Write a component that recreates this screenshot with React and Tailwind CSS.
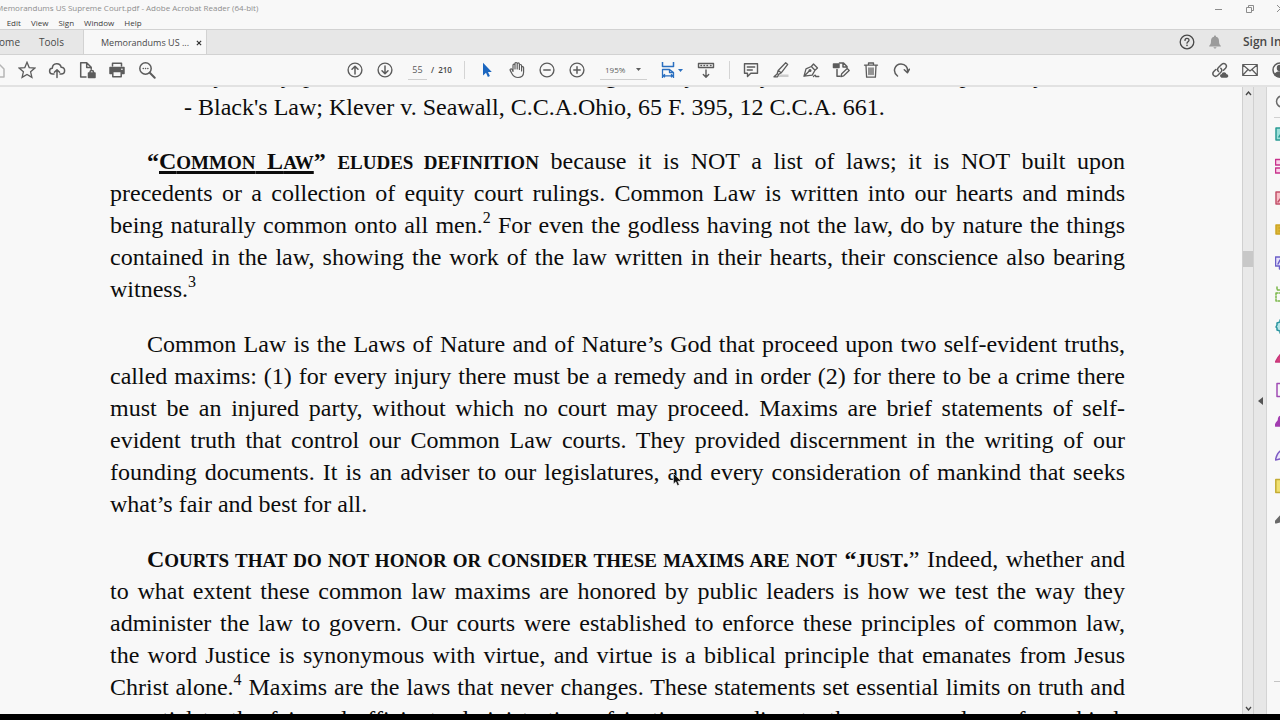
import React from "react";

const STROKE = {
  fill: "none",
  stroke: "currentColor",
  strokeWidth: 1.5,
  strokeLinecap: "round",
  strokeLinejoin: "round",
};

function Icon({ children, className = "size-[18px]", box = "0 0 18 18" }) {
  return (
    <svg viewBox={box} className={className} aria-hidden="true" {...STROKE}>
      {children}
    </svg>
  );
}

function ToolButton({ label, children, className = "" }) {
  return (
    <button
      type="button"
      aria-label={label}
      className={`flex h-8 w-[30px] shrink-0 items-center justify-center ${className}`}
    >
      {children}
    </button>
  );
}

function TitleBar() {
  return (
    <header className="flex h-4 shrink-0 items-center overflow-hidden">
      <h1 className="-ml-1 whitespace-nowrap text-[8px] text-[#8e8e8e]">
        Memorandums US Supreme Court.pdf - Adobe Acrobat Reader (64-bit)
      </h1>
      <div className="-mr-4 ml-auto flex shrink-0 text-[#8c8c8c]">
        <button type="button" aria-label="Minimize" className="flex w-[31px] justify-center">
          <svg viewBox="0 0 9 9" className="size-[9px]" fill="none" stroke="currentColor">
            <path d="M1 5.5h7" />
          </svg>
        </button>
        <button type="button" aria-label="Restore" className="flex w-[31px] justify-center">
          <svg viewBox="0 0 9 9" className="size-[9px]" fill="none" stroke="currentColor">
            <path d="M1.5 3.5h5v5h-5zM3.5 3.5v-2h5v5h-2" />
          </svg>
        </button>
        <button type="button" aria-label="Close" className="flex w-[31px] justify-center">
          <svg viewBox="0 0 9 9" className="size-[9px]" fill="none" stroke="currentColor">
            <path d="M1 1l7 7M8 1L1 8" />
          </svg>
        </button>
      </div>
    </header>
  );
}

function MenuBar() {
  return (
    <nav className="-ml-4 flex h-[13px] shrink-0 items-center gap-[10px] text-[8px] text-[#3c3c3c]">
      {["File", "Edit", "View", "Sign", "Window", "Help"].map((name) => (
        <button key={name} type="button">
          {name}
        </button>
      ))}
    </nav>
  );
}

function TabRow() {
  return (
    <div className="flex h-[26px] shrink-0 items-stretch overflow-hidden border-y border-[#d2d2d2] bg-[#e7e7e7] text-[10px] text-[#484848]">
      <button type="button" className="-ml-3 w-8 text-right">
        Home
      </button>
      <button type="button" className="w-16 border-r border-[#d2d2d2]">
        Tools
      </button>
      <div className="-mb-px flex w-[123px] items-center gap-[7px] border-r border-[#d2d2d2] bg-[#f8f8f8] pl-[17px]">
        <button type="button" className="whitespace-nowrap text-[9px]">
          Memorandums US ...
        </button>
        <button type="button" aria-label="Close tab">
          <svg viewBox="0 0 7 7" className="size-[6px]" fill="none" stroke="#333" strokeWidth="1.4">
            <path d="M1 1l5 5M6 1L1 6" />
          </svg>
        </button>
      </div>
      <div className="-mr-2 ml-auto flex shrink-0 items-center">
        <button type="button" aria-label="Help" className="flex w-7 justify-center">
          <Icon className="size-4" box="0 0 16 16">
            <circle cx="8" cy="8" r="6.8" strokeWidth="1.300" />
            <path d="M6 6.4c0-2.6 4-2.6 4-.2 0 1.5-2 1.500-2 3" strokeWidth="1.300" />
            <path d="M8 11.400v.1" strokeWidth="1.600" />
          </Icon>
        </button>
        <button type="button" aria-label="Notifications" className="flex w-7 justify-center text-[#9b9b9b]">
          <svg viewBox="0 0 14 14" className="size-[14px]" fill="currentColor">
            <path d="M7 .5c.8 0 1 .5 1 1.200 2.200.500 3 2.300 3 4.300 0 2.500.600 3.600 1.800 4.800v.7H1.200v-.7C2.400 9.600 3 8.500 3 6c0-2 .8-3.800 3-4.300C6 1 6.200.5 7 .5zM5.500 12.300h3c-.2 1.600-2.800 1.600-3 0z" />
          </svg>
        </button>
        <button type="button" className="ml-[14px] w-[45px] whitespace-nowrap text-left text-[12px] font-semibold">
          Sign In
        </button>
      </div>
    </div>
  );
}

function Separator() {
  return <div className="h-[18px] w-px shrink-0 bg-[#d4d4d4]" />;
}

function Caret({ className = "" }) {
  return (
    <svg viewBox="0 0 5 3" className={`h-[3px] w-[5px] ${className}`} fill="currentColor" aria-hidden="true">
      <path d="M0 0h5L2.500 3z" />
    </svg>
  );
}

function Toolbar() {
  return (
    <div className="flex h-8 shrink-0 items-center overflow-hidden border-b-2 border-[#e2e2e2] text-[#5c5c5c]">
      <div className="-ml-[18px] flex shrink-0">
        <ToolButton label="Save" className="text-[#b5b5b5]">
          <Icon>
            <path d="M3 3h8l5 5v8H3z" />
          </Icon>
        </ToolButton>
        <ToolButton label="Star">
          <Icon>
            <path d="M9 1.300l2.200 5.300 5.700.5-4.300 3.700 1.300 5.600L9 13.400l-4.900 3 1.300-5.600-4.300-3.700 5.700-.5z" strokeWidth="1.300" strokeLinejoin="miter" />
          </Icon>
        </ToolButton>
        <ToolButton label="Upload">
          <Icon>
            <path d="M6 13H4.800C.6 13 .6 7.400 4.300 7.200 4.600 1.700 12 1.400 13.200 6.300c4.600.2 4.500 6.700 0 6.700H12M9 16.500V8.800M6.400 11.300L9 8.700l2.600 2.600" />
          </Icon>
        </ToolButton>
        <ToolButton label="Protected document">
          <Icon>
            <path d="M8 16H2.700V1.800h6l4.500 4.500v2M8.700 2v4.500h4.500" />
            <path d="M10.500 12H17v4.500h-6.500z" fill="currentColor" />
            <path d="M12 12v-1c0-2 3.500-2 3.500 0v1" />
          </Icon>
        </ToolButton>
        <ToolButton label="Print">
          <Icon>
            <path d="M4.500 5V2.200h9V5" />
            <path d="M2 6.500h14v6H2z" fill="currentColor" />
            <path d="M4.800 10.500h8.400v5.300H4.800z" fill="#f8f8f8" />
            <path d="M13.800 8.300h.2" stroke="#f8f8f8" />
          </Icon>
        </ToolButton>
        <ToolButton label="Search">
          <Icon>
            <circle cx="7.500" cy="7.500" r="5.700" />
            <path d="M11.800 11.800l4.900 4.900" strokeWidth="2" />
            <path d="M5.200 7.500h.1M7.500 7.500h.1M9.800 7.500h.1" />
          </Icon>
        </ToolButton>
      </div>

      <div className="ml-[178px] flex shrink-0 items-center">
        <ToolButton label="Previous page">
          <Icon>
            <circle cx="9" cy="9" r="6.900" strokeWidth="1.400" />
            <path d="M9 13V5.500M6 8.200l3-3 3 3" />
          </Icon>
        </ToolButton>
        <ToolButton label="Next page">
          <Icon>
            <circle cx="9" cy="9" r="6.900" strokeWidth="1.400" />
            <path d="M9 5v7.500M6 9.800l3 3 3-3" />
          </Icon>
        </ToolButton>
        <input
          aria-label="Page number"
          defaultValue="55"
          className="ml-2 h-5 w-[19px] border-b border-[#cfcfcf] text-center text-[9px]"
        />
        <div className="ml-1 flex w-[33px] gap-1 text-[8px] font-semibold text-[#444]">
          <span>/</span>
          <span>210</span>
        </div>
        <Separator />
      </div>

      <div className="ml-[7px] flex shrink-0 items-center">
        <ToolButton label="Select" className="text-[#1b66bf]">
          <svg viewBox="0 0 10 16" className="h-4 w-[10px]" fill="currentColor">
            <path d="M1 .8v12.600l3-2.700 1.900 4.300 2-.9L6 9.900h3.800z" />
          </svg>
        </ToolButton>
        <ToolButton label="Pan">
          <Icon>
            <path d="M5 10.500V4.300c0-1.500 2-1.500 2 0V8M7 8V2.600c0-1.500 2.200-1.500 2.200 0V8M9.200 8V3c0-1.500 2.200-1.500 2.200 0v5.200M11.400 8.400V4.600c0-1.500 2.200-1.500 2.200 0V10M13.600 8.500V6.600c0-1.400 2-1.400 2 0V11c0 3.500-2 5.500-5.600 5.500-3.400 0-4.800-1.400-6-3.800L2.200 9.400C1.600 8 3.400 7.300 4.100 8.500l.9 1.700" strokeWidth="1.200" />
          </Icon>
        </ToolButton>
        <ToolButton label="Zoom out">
          <Icon>
            <circle cx="9" cy="9" r="6.900" strokeWidth="1.400" />
            <path d="M5.800 9h6.400" />
          </Icon>
        </ToolButton>
        <ToolButton label="Zoom in">
          <Icon>
            <circle cx="9" cy="9" r="6.900" strokeWidth="1.400" />
            <path d="M5.800 9h6.400M9 5.800v6.400" />
          </Icon>
        </ToolButton>
        <div className="ml-2 flex h-5 w-[47px] items-center justify-between border-b border-[#cfcfcf] pl-[5px] pr-[6px]">
          <select aria-label="Zoom level" defaultValue="195%" className="appearance-none text-[8px]">
            <option>195%</option>
          </select>
          <Caret />
        </div>
        <ToolButton label="Fit width" className="ml-[9px] gap-[2px] text-[#2a6fc0]">
          <Icon className="h-[18px] w-4" box="0 0 16 18">
            <path d="M2.500 1v4.500h11V1" strokeLinecap="butt" />
            <path d="M2.500 17V8.500h7l4 3V17M9.500 8.500v3h4M2.500 14.800h11M5 13.300l-1.800 1.500L5 16.300M11 13.300l1.800 1.500-1.800 1.500" strokeWidth="1.300" strokeLinecap="butt" />
          </Icon>
          <Caret />
        </ToolButton>
        <ToolButton label="Scrolling mode" className="ml-[5px]">
          <Icon>
            <path d="M1.500 2.500h15v4h-15zM9 9v7M6.300 13.500L9 16.200l2.700-2.700" strokeWidth="1.400" />
            <path d="M4 4.500h.5M7 4.500h.5M10 4.500h.5M13.500 4.500h.5" />
          </Icon>
        </ToolButton>
      </div>

      <div className="ml-2 flex shrink-0 items-center">
        <Separator />
        <ToolButton label="Comment" className="ml-[6px]">
          <Icon>
            <path d="M2.500 2.800h13v9.400H8.800L5.500 15.500v-3.300h-3zM5.300 6h7.400M5.300 9h5" strokeWidth="1.400" />
          </Icon>
        </ToolButton>
        <ToolButton label="Highlight">
          <Icon>
            <path d="M8 13.500h8.500v2.500H6z" fill="#cccccc" stroke="none" />
            <path d="M13.700 1.800l2 1.600-6.500 8.400-3-2.300zM6.200 9.500l-1 3 1.300 1 2.700-1.700M4.800 13.200L2 15.800h3.500l1-2" strokeWidth="1.300" />
          </Icon>
        </ToolButton>
        <ToolButton label="Sign">
          <Icon>
            <path d="M2 15.200l2-7.400 5.300-2.300 3.700 3.700-2.800 4.900zM2 15.200l5-5M9.300 5.500L11.500 3l4 4-2.500 2.200M11.500 15.500c1.500-2 2-1.500 2.300 0h3" strokeWidth="1.300" />
            <circle cx="8" cy="9.500" r=".8" />
          </Icon>
        </ToolButton>
        <ToolButton label="Edit document">
          <Icon>
            <path d="M5 8.500v6.800h3M7.500 2h4l3.500 3.500v1M11 2v4h4" />
            <path d="M1.500 3h5.500v3.500H1.500z" fill="currentColor" />
            <path d="M9 15.500l.7-2.800L15.200 7.500l2 2-5.500 5.300z" strokeWidth="1.300" />
          </Icon>
        </ToolButton>
        <ToolButton label="Delete">
          <Icon>
            <path d="M2.500 4.200h13M6.500 4V2h5v2M4 4.500l.6 11.700h8.800L14 4.500M7 7v6.500M9 7v6.500M11 7v6.500" strokeWidth="1.300" />
          </Icon>
        </ToolButton>
        <ToolButton label="Rotate">
          <Icon>
            <path d="M5.500 15C-.2 10.500 3 3 9 3c4.500 0 7 3.500 6.500 7.500M12.300 8.800l3.100 3 2-3.600" />
          </Icon>
        </ToolButton>
      </div>

      <div className="-mr-[15px] ml-auto flex shrink-0">
        <ToolButton label="Share link">
          <Icon>
            <path d="M7.500 10.500c-1.600-1.600-1-3 0-4l3-3c3-2.700 6.500.8 4 3.800l-2 2M9.800 7.300c1.600 1.600 1 3 0 4l-3 3c-3 2.700-6.500-.8-4-3.800l2-2" />
            <path d="M10.500 16c-1.500-1-.5-2.500.7-2.300.6-2.500 3.600-1.800 3.600 0 2.200-.2 2.200 2.300.7 2.300z" fill="currentColor" />
          </Icon>
        </ToolButton>
        <ToolButton label="Email">
          <Icon>
            <path d="M1.700 3.500h14.600v11H1.700zM2 4l7 6 7-6M2 14l5-5.500M16 14l-5-5.500" strokeWidth="1.200" />
          </Icon>
        </ToolButton>
        <ToolButton label="Account">
          <Icon>
            <circle cx="9" cy="9" r="7" />
            <circle cx="9" cy="7" r="2.500" fill="currentColor" />
            <path d="M4 14c1-4 9-4 10 0-2.500 2.500-7.500 2.500-10 0z" fill="currentColor" />
          </Icon>
        </ToolButton>
      </div>
    </div>
  );
}

function Line({ children, indent = false, end = false }) {
  return (
    <span
      className={`block whitespace-nowrap ${indent ? "pl-[37px]" : ""} ${
        end ? "" : "[text-align-last:justify]"
      }`}
    >
      {children}
    </span>
  );
}

function Small({ children }) {
  return <span className="text-[19px] leading-none">{children}</span>;
}

function Note({ children }) {
  return <sup className="-top-[10px] text-[16px]">{children}</sup>;
}

function Page() {
  return (
    <main className="relative min-w-0 flex-1 overflow-hidden">
      <article className="-mt-7 pl-[110px] pr-[117px] font-['Liberation_Serif',serif] text-[24px] leading-8 text-[#0c0c0c]">
        <p className="mb-[22px] pl-[74px]">
          <Line end>Any felony, person in the common law being entirely usually as the law of lords paternity</Line>
          <Line end>- Black's Law; Klever v. Seawall, C.C.A.Ohio, 65 F. 395, 12 C.C.A. 661.</Line>
        </p>
        <div className="flex flex-col gap-[23px]">
          <p>
            <Line indent>
              <strong>
                “
                <span className="underline decoration-[3px] underline-offset-2 [text-decoration-skip-ink:none]">
                  C<Small>OMMON</Small> L<Small>AW</Small>
                </span>
                ” <Small>ELUDES DEFINITION</Small>
              </strong>{" "}
              because it is NOT a list of laws; it is NOT built upon
            </Line>
            <Line>precedents or a collection of equity court rulings. Common Law is written into our hearts and minds</Line>
            <Line>
              being naturally common onto all men.<Note>2</Note> For even the godless having not the law, do by nature the things
            </Line>
            <Line>contained in the law, showing the work of the law written in their hearts, their conscience also bearing</Line>
            <Line end>
              witness.<Note>3</Note>
            </Line>
          </p>
          <p>
            <Line indent>Common Law is the Laws of Nature and of Nature’s God that proceed upon two self-evident truths,</Line>
            <Line>called maxims: (1) for every injury there must be a remedy and in order (2) for there to be a crime there</Line>
            <Line>must be an injured party, without which no court may proceed. Maxims are brief statements of self-</Line>
            <Line>evident truth that control our Common Law courts. They provided discernment in the writing of our</Line>
            <Line>founding documents. It is an adviser to our legislatures, and every consideration of mankind that seeks</Line>
            <Line end>what’s fair and best for all.</Line>
          </p>
          <p>
            <Line indent>
              <strong>
                C<Small>OURTS THAT DO NOT HONOR OR CONSIDER THESE MAXIMS ARE NOT</Small> “<Small>JUST</Small>.
              </strong>
              ” Indeed, whether and
            </Line>
            <Line>to what extent these common law maxims are honored by public leaders is how we test the way they</Line>
            <Line>administer the law to govern. Our courts were established to enforce these principles of common law,</Line>
            <Line>the word Justice is synonymous with virtue, and virtue is a biblical principle that emanates from Jesus</Line>
            <Line>
              Christ alone.<Note>4</Note> Maxims are the laws that never changes. These statements set essential limits on truth and
            </Line>
            <Line>essential to the fair and efficient administration of justice according to the common law of mankind,</Line>
          </p>
        </div>
      </article>
      <svg viewBox="0 0 9 14" className="absolute left-[673px] top-[386px] h-[14px] w-[9px]" aria-hidden="true">
        <path d="M.5.5v10.500l2.400-2.200 1.500 3.800 1.900-.8-1.600-3.600h3.500z" fill="#111" stroke="#f8f8f8" strokeWidth=".5" />
      </svg>
    </main>
  );
}

function ScrollBar() {
  return (
    <div className="flex w-3 shrink-0 flex-col items-center border-x border-[#d0d0d0] bg-[#e9e9e9] text-[#444]">
      <button type="button" aria-label="Scroll up" className="flex h-3 w-full items-center justify-center">
        <svg viewBox="0 0 7 5" className="h-[5px] w-[7px]" fill="none" stroke="currentColor" strokeWidth="1.300">
          <path d="M1 4l2.500-3L6 4" />
        </svg>
      </button>
      <div className="flex w-full flex-1 flex-col">
        <div className="grow-[152]" />
        <div className="h-4 bg-[#c8c8c8]" />
        <div className="grow-[436]" />
      </div>
      <button type="button" aria-label="Scroll down" className="flex h-3 w-full items-center justify-center">
        <svg viewBox="0 0 7 5" className="h-[5px] w-[7px]" fill="none" stroke="currentColor" strokeWidth="1.300">
          <path d="M1 1l2.500 3L6 1" />
        </svg>
      </button>
    </div>
  );
}

const TOOLS = [
  { name: "Export PDF", color: "text-[#2a9a94]", art: <path d="M1 2h13v12H1zM4 11l3-5 3 5" fill="#9ee0da" /> },
  { name: "Organize pages", color: "text-[#c8328c]", art: <path d="M.5 1.500h6v5.500h-6zM.5 10h6v5h-6zM9 2h6v5H9z" fill="#fbd3ea" /> },
  { name: "Create PDF", color: "text-[#c2506a]", art: <path d="M1 2h13v12H1zM3 12l3-4" fill="#f8c0c8" /> },
  { name: "Comment", color: "text-[#cda524]", art: <path d="M1 3h13v9H1zM4 6h4M4 9h4" fill="#dcb637" /> },
  { name: "Request signatures", color: "text-[#6b5fc8]", art: <path d="M.5 3h13v9h-7l-2 3v-3h-4zM3 10l2-4 2 4" fill="#e6e1fa" /> },
  { name: "Scan", color: "text-[#7ab648]", art: <path d="M1 7h12v8H1zM2 1v3h5" strokeDasharray="2 1.500" /> },
  { name: "Protect", color: "text-[#2b95a0]", art: <path d="M5 2h5v2l3 2v5l-3 2v2H5v-2l-3-1v-2l-1-1 1-2V5l3-1z" fill="#b9e6e8" /> },
  { name: "Fill and sign", color: "text-[#c8387c]", art: <path d="M.5 12c2-4 4-8 8-10v10z" fill="#d8407c" /> },
  { name: "Compare files", color: "text-[#a04cb4]", art: <path d="M2 1.500h11v13H2z" /> },
  { name: "Send for review", color: "text-[#a23cb0]", art: <path d="M.5 12c0-4 3-4 3-6 0-5 6-5 6 0 0 2 3 2 3 6z" fill="#a23cb0" /> },
  { name: "Certificates", color: "text-[#7e5cc4]", art: <path d="M.5 14c1-5 3-9 7-10l3 4c-1 3-4 5-10 6z" fill="#eee8fa" /> },
  { name: "Stamp", color: "text-[#c4ac34]", art: <path d="M.8 1.500H13v13H.8z" fill="#f0e070" /> },
  { name: "More tools", color: "text-[#6a6a6a]", art: <path d="M1 12l7-8M1 12l4-1" strokeWidth="3" /> },
];

function ToolsPane() {
  return (
    <aside className="flex w-[13px] shrink-0 flex-col overflow-hidden text-[#6a6a6a]">
      <button type="button" aria-label="Search tools" className="ml-2 flex h-[30px] w-4 shrink-0 items-center">
        <Icon className="size-4 shrink-0" box="0 0 16 16">
          <circle cx="7" cy="7.500" r="5.500" />
        </Icon>
      </button>
      <div className="ml-[7px] h-px shrink-0 bg-[#d0d0d0]" />
      <ul>
        {TOOLS.map((tool) => (
          <li key={tool.name}>
            <button type="button" aria-label={tool.name} className={`ml-2 flex h-8 w-4 items-center ${tool.color}`}>
              <Icon className="size-4 shrink-0" box="0 0 16 16">
                {tool.art}
              </Icon>
            </button>
          </li>
        ))}
      </ul>
      <div className="mb-8 ml-[7px] mt-auto h-px shrink-0 bg-[#c4c4c4]" />
    </aside>
  );
}

export default function App() {
  return (
    <div className="flex h-screen flex-col overflow-hidden border-b-[6px] border-black bg-[#f8f8f8] font-['Open_Sans',sans-serif]">
      <TitleBar />
      <MenuBar />
      <TabRow />
      <Toolbar />
      <div className="flex min-h-0 flex-1">
        <Page />
        <ScrollBar />
        <button
          type="button"
          aria-label="Collapse tools pane"
          className="flex w-[13px] shrink-0 items-center justify-center border-r border-[#d4d4d4] bg-[#e7e7e7] text-[#555]"
        >
          <svg viewBox="0 0 5 8" className="h-2 w-[5px]" fill="currentColor">
            <path d="M5 0v8L0 4z" />
          </svg>
        </button>
        <ToolsPane />
      </div>
    </div>
  );
}
